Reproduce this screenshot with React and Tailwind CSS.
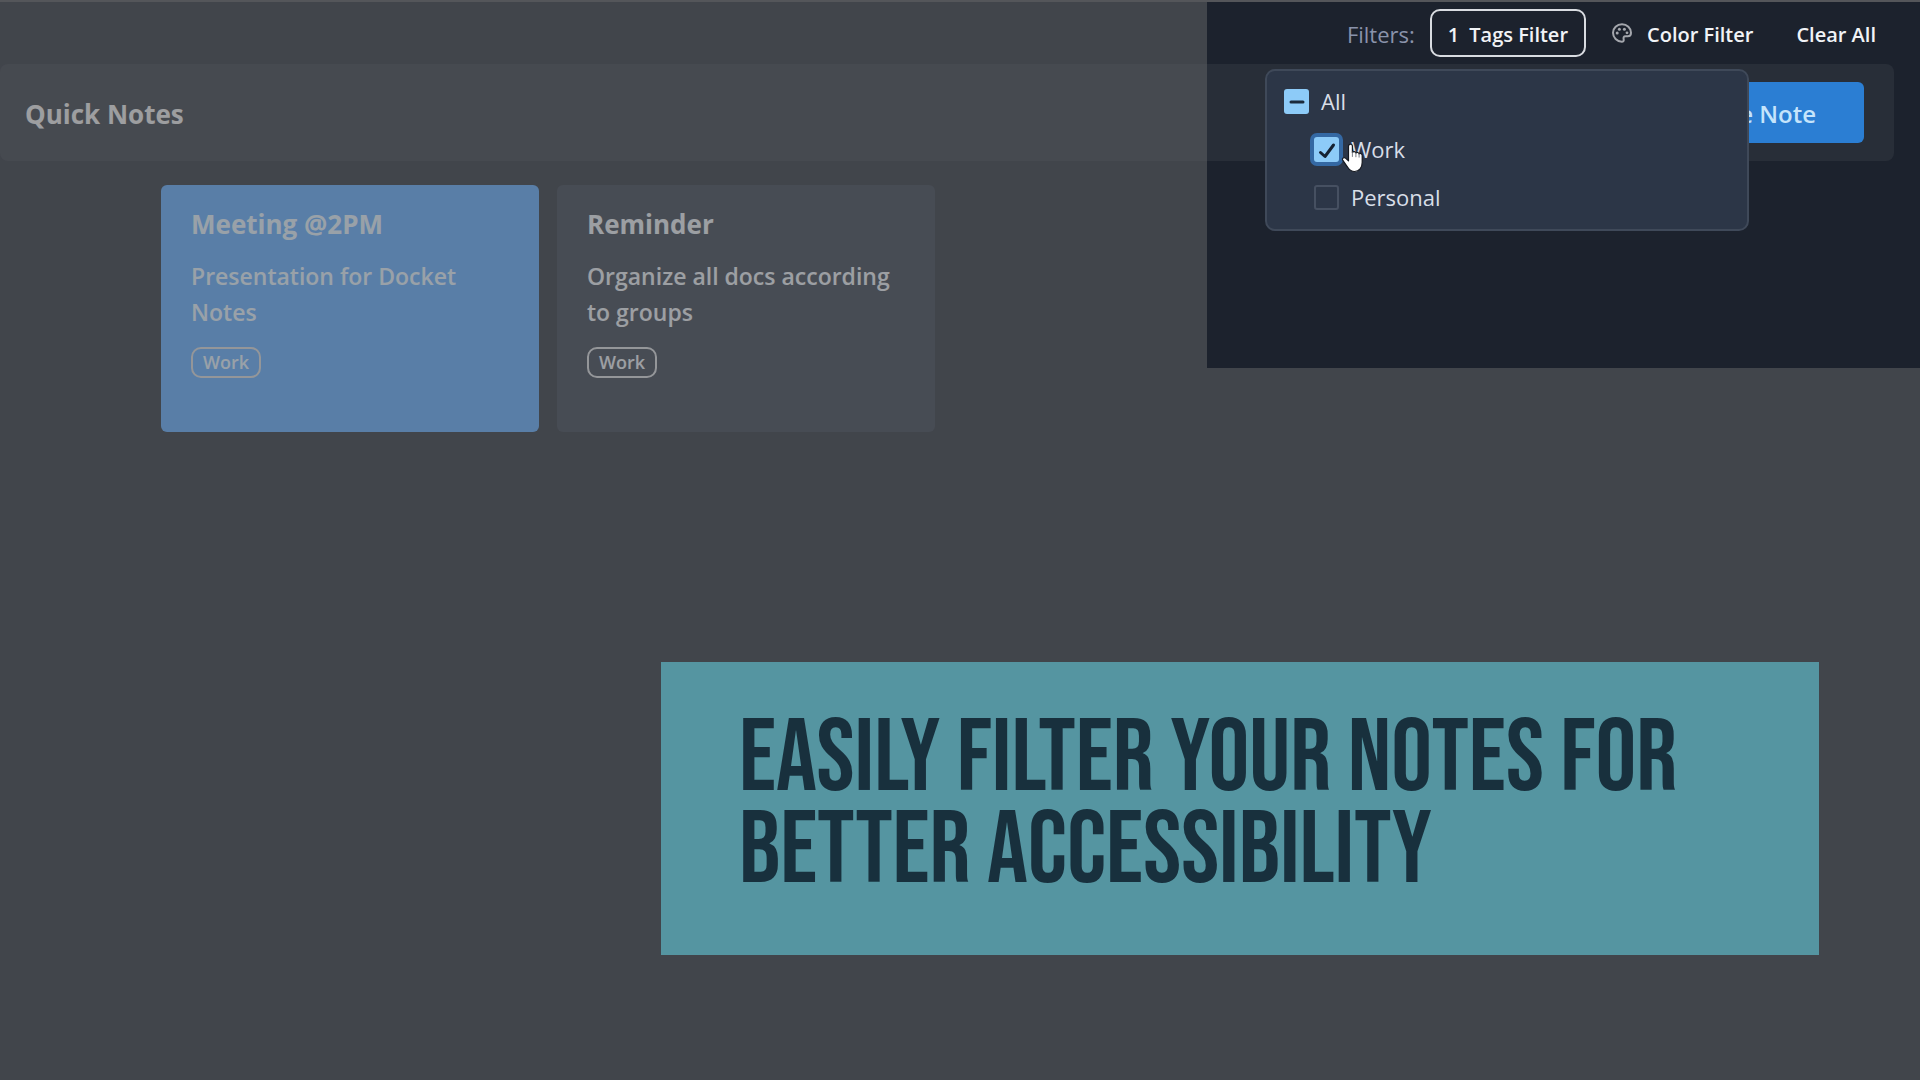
import React, { useState } from "react";

const notes = [
  { title: "Meeting @2PM", body: "Presentation for Docket Notes", tag: "Work", tone: "bg-[#52a5fd] text-[#e4f4ff]" },
  { title: "Reminder", body: "Organize all docs according to groups", tag: "Work", tone: "bg-[#2b3340] text-[#ebeff4]" },
];

function PaletteIcon() {
  return (
    <svg viewBox="0 0 20 20" className="h-5 w-5 fill-none stroke-[#a4a7ad]" strokeWidth="2" aria-hidden="true">
      <path d="M10 1.3C5 1.3 1 5 1 9.8s4 8.900 8.800 8.900c1.500 0 2.200-1 1.900-2.300-.5-1.900-.1-3.100 1.900-3.100h2.200c2 0 3.200-1.400 3.200-3.500C19 5 15 1.300 10 1.300z" />
      <g className="fill-[#a4a7ad] stroke-none">
        <circle cx="5.200" cy="10" r="1.500" />
        <circle cx="7.400" cy="6.200" r="1.500" />
        <circle cx="12.400" cy="6.200" r="1.500" />
        <circle cx="15" cy="9.800" r="1.400" />
      </g>
    </svg>
  );
}

function HandCursor() {
  return (
    <svg viewBox="0 0 24 30" className="pointer-events-none absolute left-[27px] top-[10px] z-10 h-[30px] w-6" aria-hidden="true">
      <path
        d="M7.500 3.200c0-2.600 3.900-2.600 3.900 0v6.300c.5-1.300 3.200-1.200 3.500.5.900-1 3-.7 3.200.8 1.100-.8 3.100-.3 3.100 1.600v7c0 5-3 9.100-7.600 9.100-3.400 0-5.200-1.500-6.900-4.200l-5-7.200c-1-1.700 1.200-3.400 2.800-2l3 2.700z"
        fill="#fff"
        stroke="#15181f"
        strokeWidth="1.200"
        strokeLinejoin="round"
      />
      <path d="M11.400 9v4.500M14.900 10v3.800M18.100 11v3.200" stroke="#6b6f78" strokeWidth=".9" strokeLinecap="round" />
    </svg>
  );
}

function CheckRow({ id, label, checked, mixed, focused, onChange, className = "", children }) {
  return (
    <div className={"relative flex items-center gap-3 " + className}>
      <span className="relative flex h-[25px] w-[25px] shrink-0">
        <input
          id={id}
          type="checkbox"
          checked={checked}
          onChange={onChange}
          className={
            "h-full w-full appearance-none rounded-[3px] outline-none " +
            (checked || mixed ? "bg-[#8dcbf8] " : "border-2 border-[#465061] ") +
            (focused ? "ring-4 ring-[#3468a3]" : "")
          }
        />
        {mixed && (
          <svg viewBox="0 0 25 25" className="pointer-events-none absolute inset-0" aria-hidden="true">
            <path d="M7 13h12" stroke="#1a2a3c" strokeWidth="3" strokeLinecap="round" />
          </svg>
        )}
        {checked && (
          <svg viewBox="0 0 25 25" className="pointer-events-none absolute inset-0" aria-hidden="true">
            <path d="M6.500 15.500l4.500 4L19.500 8" fill="none" stroke="#152233" strokeWidth="3" strokeLinecap="round" strokeLinejoin="round" />
          </svg>
        )}
      </span>
      <label htmlFor={id} className="text-[22px] leading-8 text-[#d8dee8]">{label}</label>
      {children}
    </div>
  );
}

export default function App() {
  const [work, setWork] = useState(true);
  const [personal, setPersonal] = useState(false);
  const all = work && personal;
  const toggleAll = () => {
    setWork(!all);
    setPersonal(!all);
  };

  return (
    <div className="relative min-h-screen overflow-hidden bg-[#1c222d] font-['Open_Sans','Noto_Sans',sans-serif]">
      <header className="flex h-16 items-center justify-end border-t-2 border-[#484a4f] pr-11 text-xl text-[#f1f3f6]">
        <span className="mr-[15px] pt-0.5 text-[22px] text-[#8a93aa]">Filters:</span>
        <div className="relative">
          <button type="button" className="flex h-12 items-center gap-2.5 whitespace-nowrap rounded-[10px] border-2 border-[#d9dce1] px-4 pt-1 font-semibold">
            <span>1</span>
            <span>Tags Filter</span>
          </button>
          <div className="absolute right-[-163px] top-[60px] z-10 flex w-[484px] flex-col gap-4 rounded-[10px] border-2 border-[#3f4959] bg-[#2c3647] px-[17px] pb-4 pt-[14px]">
            <CheckRow id="tag-all" label="All" checked={all} mixed={work !== personal} onChange={toggleAll} />
            <CheckRow id="tag-work" label="Work" checked={work} focused onChange={() => setWork(!work)} className="ml-[30px]">
              <HandCursor />
            </CheckRow>
            <CheckRow id="tag-personal" label="Personal" checked={personal} onChange={() => setPersonal(!personal)} className="ml-[30px]" />
          </div>
        </div>
        <button type="button" className="ml-[26px] flex items-center gap-[15px] whitespace-nowrap font-semibold">
          <PaletteIcon />
          <span className="pt-1">Color Filter</span>
        </button>
        <button type="button" className="ml-[43px] whitespace-nowrap pt-1 font-semibold">Clear All</button>
      </header>

      <section className="mr-[26px] flex h-[97px] items-center justify-between rounded-lg bg-[#282e38] pl-[25px] pr-[30px]">
        <h1 className="pt-1 text-[26px] font-bold text-[#ececec]">Quick Notes</h1>
        <button type="button" className="h-[61px] rounded-md bg-[#2b7ed3] px-12 pt-0.5 text-2xl font-semibold text-[#c5e4fb]">Create Note</button>
      </section>

      <main className="mt-6 flex flex-wrap gap-[18px] px-[161px]">
        {notes.map((note) => (
          <article key={note.title} className={"flex min-h-[247px] w-[378px] flex-col items-start rounded-md px-[30px] pt-[21px] " + note.tone}>
            <h2 className="text-[26px] font-bold leading-9">{note.title}</h2>
            <p className="mt-4 text-[23px] font-semibold leading-9">{note.body}</p>
            <span className="mt-[17px] rounded-[10px] border-2 border-[#d8dade] px-2.5 text-lg font-semibold leading-[27px]">{note.tag}</span>
          </article>
        ))}
      </main>

      <div className="pointer-events-none absolute right-0 top-0.5 z-20 h-[366px] w-[713px] shadow-[0_0_0_2000px_rgba(94,96,100,0.56)]" />

      <aside className="absolute left-[661px] right-[101px] top-[662px] z-30 min-h-[293px] bg-[#5595a1] px-[78px] pt-[52px]">
        <p className="whitespace-nowrap font-['Bebas_Neue','Liberation_Sans_Narrow',sans-serif] text-[102px] uppercase leading-[92px] text-[#18303d]">
          Easily filter your notes for
          <br />
          better accessibility
        </p>
      </aside>
    </div>
  );
}
